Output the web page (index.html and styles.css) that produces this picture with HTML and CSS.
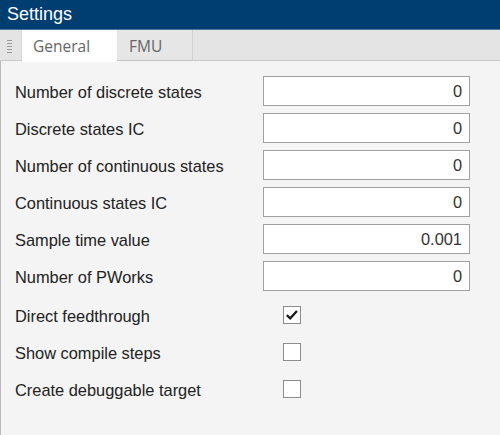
FILE: index.html
```html
<!DOCTYPE html>
<html>
<head>
<meta charset="utf-8">
<link rel="stylesheet" href="styles.css">
</head>
<body>
<div class="panel">
  <div class="titlebar">Settings</div>
  <div class="tabbar">
    <div class="grip"><span></span><span></span><span></span><span></span><span></span></div>
    <div class="tab active">General</div>
    <div class="tab">FMU</div>
  </div>
  <div class="content">
    <div class="fields">
      <div class="row"><span class="label">Number of discrete states</span><div class="input">0</div></div>
      <div class="row"><span class="label">Discrete states IC</span><div class="input">0</div></div>
      <div class="row"><span class="label">Number of continuous states</span><div class="input">0</div></div>
      <div class="row"><span class="label">Continuous states IC</span><div class="input">0</div></div>
      <div class="row"><span class="label">Sample time value</span><div class="input">0.001</div></div>
      <div class="row"><span class="label">Number of PWorks</span><div class="input">0</div></div>
    </div>
    <div class="checks">
      <div class="row"><span class="label">Direct feedthrough</span><div class="check-cell"><div class="checkbox"><svg viewBox="0 0 18 18" width="16" height="16"><path d="M3.2 9.2 L7 12.8 L14.6 4.6" fill="none" stroke="#1a1a1a" stroke-width="2.6" stroke-linecap="butt" stroke-linejoin="miter"/></svg></div></div></div>
      <div class="row"><span class="label">Show compile steps</span><div class="check-cell"><div class="checkbox"></div></div></div>
      <div class="row"><span class="label">Create debuggable target</span><div class="check-cell"><div class="checkbox"></div></div></div>
    </div>
  </div>
</div>
</body>
</html>
```

FILE: styles.css
```css
html, body {
  margin: 0;
  padding: 0;
  background: #f4f4f4;
}
.panel {
  width: 500px;
  height: 435px;
  display: flex;
  flex-direction: column;
  font-family: "Liberation Sans", Arial, sans-serif;
  overflow: hidden;
}
.titlebar {
  height: 29px;
  background: #003e72;
  border-bottom: 1px solid #4f7194;
  color: #ffffff;
  font-size: 18px;
  line-height: 29px;
  padding-left: 7px;
  box-sizing: content-box;
}
.tabbar {
  height: 30px;
  background: #e4e4e4;
  border-bottom: 1px solid #c9c9c9;
  display: flex;
  align-items: flex-start;
}
.grip {
  width: 21px;
  display: flex;
  flex-direction: column;
  align-items: center;
  gap: 2px;
  padding-top: 10px;
  box-sizing: border-box;
  padding-right: 2px;
}
.grip span {
  display: block;
  width: 5px;
  height: 1px;
  background: #9a9a9a;
}
.tab {
  font-family: "Open Sans", "Noto Sans", sans-serif;
  font-size: 15.5px;
  color: #666;
  height: 31px;
  line-height: 32px;
  box-sizing: border-box;
}
.tab.active {
  background: #ffffff;
  width: 96px;
  padding-left: 11px;
  border-left: 1px solid #d6d6d6;
  height: 32px;
  position: relative;
  z-index: 1;
}
.tab:not(.active) {
  width: 76px;
  padding-left: 12px;
  background: #e6e6e6;
  border-right: 1px solid #cfcfcf;
  border-bottom: 1px solid #c4c4c4;
}
.content {
  flex: 1;
  background: #f4f4f4;
  border-left: 1px solid #b9b9b9;
  padding: 15px 0 0 14px;
}
.fields, .checks {
  display: flex;
  flex-direction: column;
  gap: 7px;
}
.checks {
  margin-top: 9px;
}
.row {
  display: flex;
  align-items: center;
  height: 30px;
}
.label {
  width: 248px;
  font-size: 16.4px;
  color: #222;
  padding-top: 2px;
}
.input {
  width: 207px;
  height: 30px;
  box-sizing: border-box;
  background: #ffffff;
  border: 1px solid #a0a0a0;
  text-align: right;
  padding-right: 7px;
  font-size: 16.4px;
  line-height: 29px;
  color: #333;
}
.check-cell {
  padding-left: 20px;
}
.checkbox {
  width: 18px;
  height: 18px;
  box-sizing: border-box;
  border: 1px solid #8c8c8c;
  background: #ffffff;
  display: flex;
  align-items: center;
  justify-content: center;
}
```
